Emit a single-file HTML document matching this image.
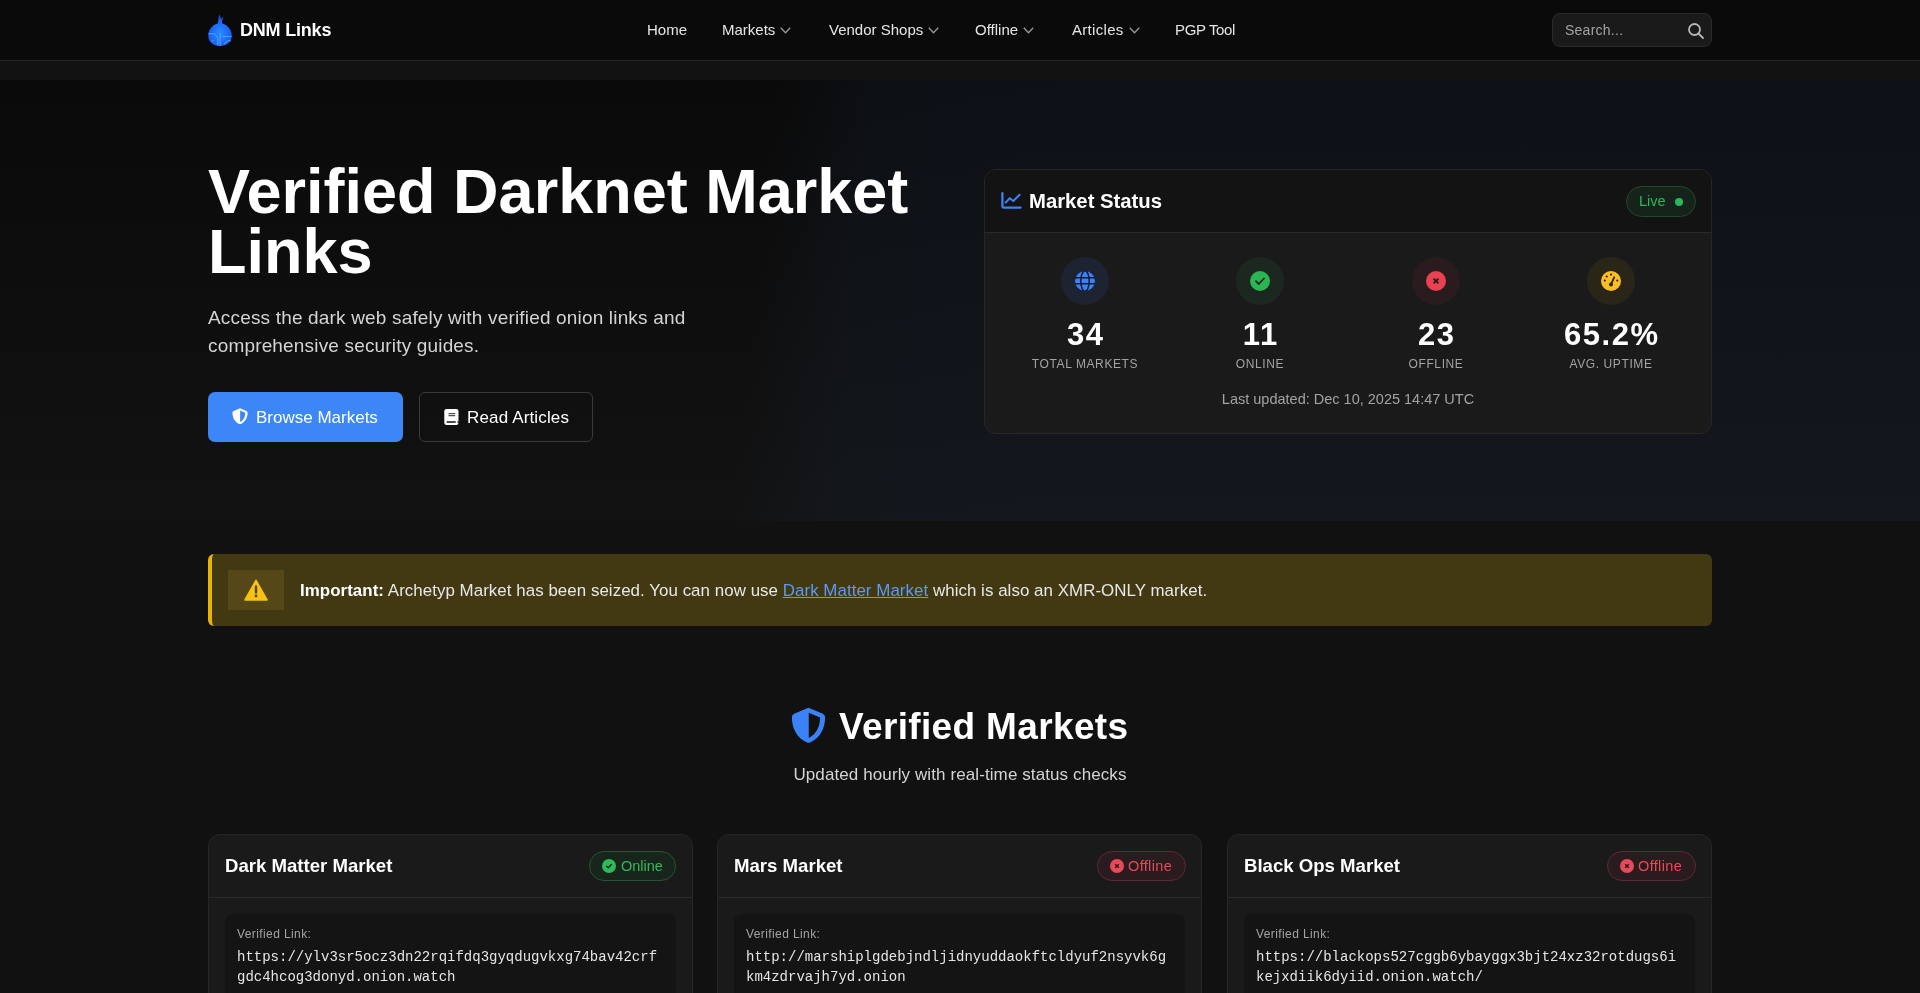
<!DOCTYPE html>
<html>
<head>
<meta charset="utf-8">
<style>
*{margin:0;padding:0;box-sizing:border-box}
html,body{width:1920px;height:993px;overflow:hidden}
body{background:#111111;font-family:"Liberation Sans",sans-serif;color:#fff;position:relative}
.abs{position:absolute}
nav{position:absolute;left:0;top:0;width:1920px;height:61px;background:#0a0a0a;border-bottom:1px solid #262626}
.band{position:absolute;left:0;top:61px;width:1920px;height:19px;background:#121212}
.hero{position:absolute;left:0;top:80px;width:1920px;height:441px;background:linear-gradient(96deg,rgba(40,78,138,0) 39.5%,rgba(40,78,138,0.08) 44.5%,rgba(40,78,138,0.1) 55%,rgba(40,78,138,0.1) 100%),linear-gradient(180deg,#0a0a0a 0%,#121212 100%)}
.logo-t{position:absolute;left:240px;top:20px;font-size:18px;font-weight:700;color:#fff;letter-spacing:-0.2px}
.nl{position:absolute;top:21px;font-size:15px;color:#e5e5e5;white-space:nowrap}
.chev{display:inline-block;vertical-align:middle;margin-left:5px;margin-top:-2px}
.search{position:absolute;left:1552px;top:13px;width:160px;height:34px;border-radius:8px;background:#1a1a1a;border:1px solid #2a2a2a}
.search span{position:absolute;left:12px;top:8px;font-size:14px;letter-spacing:0.25px;color:#a3a3a3}
h1{position:absolute;left:208px;top:161px;font-size:63px;line-height:60px;font-weight:700;color:#fff;letter-spacing:0px;white-space:nowrap}
.lead{position:absolute;left:208px;top:304px;font-size:19px;line-height:28px;color:#d4d4d4;letter-spacing:0.17px;white-space:nowrap}
.btn1{position:absolute;left:208px;top:392px;width:195px;height:50px;border-radius:7px;background:#3d86f7}
.btn2{position:absolute;left:419px;top:392px;width:174px;height:50px;border-radius:6px;border:1px solid #3a3a3a}
.btxt{position:absolute;top:16px;font-size:16px;color:#fff;white-space:nowrap}
.card{position:absolute;border-radius:12px;border:1px solid #262626;background:#1a1a1a;overflow:hidden}
.ms{left:984px;top:169px;width:728px;height:265px}
.ms .hd{position:absolute;left:0;top:0;width:100%;height:63px;background:#131313;border-bottom:1px solid #2a2a2a}
.stat{position:absolute;top:87px;width:170px;text-align:center}
.circ{width:48px;height:48px;border-radius:50%;margin:0 auto;position:relative}
.num{font-size:31px;font-weight:700;line-height:36px;margin-top:12px;color:#fff;letter-spacing:1.5px;text-indent:1.5px}
.lbl{font-size:12px;letter-spacing:0.6px;color:#a3a3a3;margin-top:4px}
.alert{position:absolute;left:208px;top:554px;width:1504px;height:72px;border-radius:6px;background:#423812;border-left:4px solid #eab308}
.mcard{top:834px;width:485px;height:200px}
.mcard .hd{position:absolute;left:0;top:0;width:100%;height:63px;border-bottom:1px solid #2a2a2a}
.mt{position:absolute;left:16px;top:20px;font-size:18.6px;font-weight:700;color:#fff;white-space:nowrap}
.badge{position:absolute;top:16px;height:30px;border-radius:15px;font-size:14.5px;white-space:nowrap}
.lbox{position:absolute;left:16px;top:79px;width:451px;height:120px;border-radius:8px;background:#141414}
.vl{position:absolute;left:12px;top:13px;font-size:12px;letter-spacing:0.4px;color:#a3a3a3}
.mono{position:absolute;left:12px;top:33px;font-family:"Liberation Mono",monospace;font-size:14px;line-height:20px;color:#e5e5e5;white-space:nowrap}
</style>
</head>
<body>
<div style="position:absolute;left:0;top:0;width:1920px;height:993px;will-change:transform">
<nav>
  <svg class="abs" style="left:206px;top:12px" width="28" height="36" viewBox="0 0 28 36">
    <defs><radialGradient id="og" cx="50%" cy="60%" r="60%"><stop offset="0" stop-color="#2a8cff"/><stop offset="1" stop-color="#1650f0"/></radialGradient></defs>
    <path d="M13.2 2.5 C14.5 4.5 14.6 6 14.8 7.5 C15.8 6.2 16.6 5.6 17.6 5.2 C16.6 7 16 9 16 11.2 C20.8 12.6 25.8 17 25.8 23.5 C25.8 30 20.5 34 14 34 C7.5 34 2.2 30 2.2 23.5 C2.2 17 7.2 12.6 12 11.2 C12.3 8 12.8 5 13.2 2.5 Z" fill="url(#og)"/>
    <path d="M2.6 21.8 H8.5 L11.8 25.5 V33.5 M14.2 21.5 V33.8 M16.5 24.6 H25.5 M18 32 L21.5 28.8 H25 M5.8 29 L7.8 28" stroke="#55b6ff" stroke-width="1" fill="none" opacity=".85"/>
  </svg>
  <div class="logo-t">DNM Links</div>
  <div class="nl" style="left:647px">Home</div>
  <div class="nl" style="left:722px">Markets<svg class="chev" width="11" height="7" viewBox="0 0 11 7"><path d="M0.8 0.8 L5.5 5.8 L10.2 0.8" stroke="#9a9a9a" stroke-width="1.3" fill="none"/></svg></div>
  <div class="nl" style="left:829px">Vendor Shops<svg class="chev" width="11" height="7" viewBox="0 0 11 7"><path d="M0.8 0.8 L5.5 5.8 L10.2 0.8" stroke="#9a9a9a" stroke-width="1.3" fill="none"/></svg></div>
  <div class="nl" style="left:975px">Offline<svg class="chev" width="11" height="7" viewBox="0 0 11 7"><path d="M0.8 0.8 L5.5 5.8 L10.2 0.8" stroke="#9a9a9a" stroke-width="1.3" fill="none"/></svg></div>
  <div class="nl" style="left:1072px;letter-spacing:0.3px">Articles<svg class="chev" width="11" height="7" viewBox="0 0 11 7"><path d="M0.8 0.8 L5.5 5.8 L10.2 0.8" stroke="#9a9a9a" stroke-width="1.3" fill="none"/></svg></div>
  <div class="nl" style="left:1175px;letter-spacing:-0.35px">PGP Tool</div>
  <div class="search"><span>Search...</span>
    <svg class="abs" style="left:134px;top:8px" width="18" height="18" viewBox="0 0 18 18"><circle cx="7.5" cy="7.5" r="5.5" stroke="#b5b5b5" stroke-width="1.8" fill="none"/><path d="M11.5 11.5 L16 16" stroke="#b5b5b5" stroke-width="1.8" stroke-linecap="round"/></svg>
  </div>
</nav>
<div class="band"></div>
<div class="hero"></div>

<h1>Verified Darknet Market<br>Links</h1>
<div class="lead">Access the dark web safely with verified onion links and<br>comprehensive security guides.</div>
<div class="btn1">
  <svg class="abs" style="left:24px;top:16px" width="16" height="17" viewBox="0 0 16 17"><path d="M8 0.3 L14.3 3 C15.1 3.3 15.6 4 15.6 4.8 C15.5 9.8 13.4 14 8.7 16.1 C8.25 16.3 7.75 16.3 7.3 16.1 C2.6 14 0.5 9.8 0.4 4.8 C0.4 4 0.9 3.3 1.7 3 Z" fill="#fff"/><path d="M8.1 2.6 L13.3 4.8 C13.2 9 11.6 12.3 8.1 14.1 Z" fill="#3d86f7"/></svg>
  <div class="btxt" style="left:48px;font-size:17px;top:16px">Browse Markets</div>
</div>
<div class="btn2">
  <svg class="abs" style="left:24px;top:16px" width="15" height="16" viewBox="0 0 15 16"><rect x="0.3" y="0" width="14.2" height="16" rx="2.3" fill="#fff"/><path d="M4.5 4.7 H11.2 M4.5 6.7 H11.2" stroke="#111" stroke-width="0.9"/><path d="M3.2 13.1 H11.2" stroke="#111" stroke-width="1.5" stroke-linecap="round"/><rect x="13.5" y="12.2" width="1.2" height="1.7" fill="#111"/></svg>
  <div class="btxt" style="left:47px;font-size:17px;top:15px;letter-spacing:0.15px">Read Articles</div>
</div>

<div class="card ms">
  <div class="hd"></div>
  <svg class="abs" style="left:16px;top:22px" width="21" height="18" viewBox="0 0 21 18"><path d="M1.4 1.2 V14 Q1.4 15.6 3 15.6 H19.6" stroke="#3b82f6" stroke-width="2.3" fill="none" stroke-linecap="round" stroke-linejoin="round"/><path d="M4.6 10.6 L8.8 6.2 L12.3 9 L18.6 2.8" stroke="#3b82f6" stroke-width="2.1" fill="none" stroke-linecap="round" stroke-linejoin="round"/></svg>
  <div class="abs" style="left:44px;top:20px;font-size:20.3px;font-weight:700;white-space:nowrap">Market Status</div>
  <div class="abs" style="left:641px;top:16px;width:70px;height:31px;border-radius:16px;background:#15231a;border:1px solid #1f4a2b">
    <span class="abs" style="left:12px;top:6px;font-size:14.5px;color:#2bb85a">Live</span>
    <span class="abs" style="left:48px;top:11px;width:8px;height:8px;border-radius:50%;background:#2bb85a"></span>
  </div>
  <div class="stat" style="left:15px">
    <div class="circ" style="background:#1d2330">
      <svg class="abs" style="left:14px;top:14px" width="20" height="20" viewBox="0 0 20 20"><circle cx="10" cy="10" r="10" fill="#3b82f6"/><ellipse cx="10" cy="10" rx="4.2" ry="10.2" stroke="#0d1a33" stroke-width="1.5" fill="none"/><path d="M0 6.8 H20 M0 12.7 H20" stroke="#0d1a33" stroke-width="1.5" fill="none"/></svg>
    </div>
    <div class="num">34</div><div class="lbl">TOTAL MARKETS</div>
  </div>
  <div class="stat" style="left:190px">
    <div class="circ" style="background:#1b271f">
      <svg class="abs" style="left:14px;top:14px" width="20" height="20" viewBox="0 0 20 20"><circle cx="10" cy="10" r="10" fill="#2bb553"/><path d="M6 10.2 L8.8 13 L14 7.5" stroke="#1b271f" stroke-width="1.8" fill="none" stroke-linecap="round" stroke-linejoin="round"/></svg>
    </div>
    <div class="num">11</div><div class="lbl">ONLINE</div>
  </div>
  <div class="stat" style="left:366px">
    <div class="circ" style="background:#2a1c1e">
      <svg class="abs" style="left:14px;top:14px" width="20" height="20" viewBox="0 0 20 20"><circle cx="10" cy="10" r="10" fill="#e8414f"/><path d="M7.6 7.6 L12.4 12.4 M12.4 7.6 L7.6 12.4" stroke="#2a1c1e" stroke-width="2" stroke-linecap="butt"/></svg>
    </div>
    <div class="num">23</div><div class="lbl">OFFLINE</div>
  </div>
  <div class="stat" style="left:541px">
    <div class="circ" style="background:#2a2617">
      <svg class="abs" style="left:14px;top:14px" width="20" height="20" viewBox="0 0 20 20"><circle cx="10" cy="10" r="10" fill="#fbbf24"/><path d="M10 13.3 L13.2 6.3" stroke="#2a2617" stroke-width="1.8" stroke-linecap="round"/><circle cx="10" cy="13.5" r="2" fill="#2a2617"/><circle cx="3.8" cy="9.6" r="1.1" fill="#2a2617"/><circle cx="5.7" cy="5.5" r="1.1" fill="#2a2617"/><circle cx="10" cy="3.6" r="1.1" fill="#2a2617"/><circle cx="16.3" cy="9.6" r="1.1" fill="#2a2617"/></svg>
    </div>
    <div class="num">65.2%</div><div class="lbl">AVG. UPTIME</div>
  </div>
  <div class="abs" style="left:0;top:221px;width:726px;text-align:center;font-size:14.5px;color:#a3a3a3">Last updated: Dec 10, 2025 14:47 UTC</div>
</div>

<div class="alert">
  <div class="abs" style="left:16px;top:16px;width:56px;height:40px;background:#564719">
    <svg class="abs" style="left:16px;top:9px" width="24" height="23" viewBox="0 0 24 23"><path d="M12 1.3 L23 20.9 H1 Z" fill="#f7c312" stroke="#f7c312" stroke-width="1.6" stroke-linejoin="round"/><path d="M12 7.5 V13.5" stroke="#564719" stroke-width="2.4" stroke-linecap="round"/><circle cx="12" cy="17" r="1.4" fill="#564719"/></svg>
  </div>
  <div class="abs" style="left:88px;top:27px;font-size:16.9px;letter-spacing:0.05px;color:#e8e8e8;white-space:nowrap"><b style="color:#fff">Important:</b> Archetyp Market has been seized. You can now use <span style="color:#5b9bf0;text-decoration:underline">Dark Matter Market</span> which is also an XMR-ONLY market.</div>
</div>

<svg class="abs" style="left:791px;top:707px" width="35" height="37.5" viewBox="0 0 16 17" preserveAspectRatio="none"><path d="M8 0.3 L14.3 3 C15.1 3.3 15.6 4 15.6 4.8 C15.5 9.8 13.4 14 8.7 16.1 C8.25 16.3 7.75 16.3 7.3 16.1 C2.6 14 0.5 9.8 0.4 4.8 C0.4 4 0.9 3.3 1.7 3 Z" fill="#3b82f6"/><path d="M8.1 2.6 L13.3 4.8 C13.2 9 11.6 12.3 8.1 14.1 Z" fill="#111111"/></svg>
<div class="abs" style="left:839px;top:706px;font-size:37px;font-weight:700;letter-spacing:0.35px;white-space:nowrap">Verified Markets</div>
<div class="abs" style="left:0;top:765px;width:1920px;text-align:center;font-size:17px;letter-spacing:0.1px;color:#d4d4d4">Updated hourly with real-time status checks</div>

<div class="card mcard" style="left:208px">
  <div class="hd"></div>
  <div class="mt">Dark Matter Market</div>
  <div class="badge" style="left:380px;width:87px;background:#17251b;border:1px solid #275535;color:#30b95a">
    <svg class="abs" style="left:12px;top:7px" width="14" height="14" viewBox="0 0 14 14"><circle cx="7" cy="7" r="7" fill="#30b95a"/><path d="M4.6 7.2 L6.3 8.8 L9.4 5.6" stroke="#17251b" stroke-width="1.4" fill="none" stroke-linecap="round"/></svg>
    <span class="abs" style="left:31px;top:6px">Online</span>
  </div>
  <div class="lbox"><div class="vl">Verified Link:</div><div class="mono">https://ylv3sr5ocz3dn22rqifdq3gyqdugvkxg74bav42crf<br>gdc4hcog3donyd.onion.watch</div></div>
</div>
<div class="card mcard" style="left:717px">
  <div class="hd"></div>
  <div class="mt">Mars Market</div>
  <div class="badge" style="left:379px;width:89px;background:#2a1b1e;border:1px solid #5e2a35;color:#e84a5a">
    <svg class="abs" style="left:12px;top:7px" width="14" height="14" viewBox="0 0 14 14"><circle cx="7" cy="7" r="7" fill="#e84a5a"/><path d="M5.2 5.2 L8.8 8.8 M8.8 5.2 L5.2 8.8" stroke="#2a1b1e" stroke-width="1.5"/></svg>
    <span class="abs" style="left:30px;top:6px;letter-spacing:0.35px">Offline</span>
  </div>
  <div class="lbox"><div class="vl">Verified Link:</div><div class="mono">http://marshiplgdebjndljidnyuddaokftcldyuf2nsyvk6g<br>km4zdrvajh7yd.onion</div></div>
</div>
<div class="card mcard" style="left:1227px">
  <div class="hd"></div>
  <div class="mt">Black Ops Market</div>
  <div class="badge" style="left:379px;width:89px;background:#2a1b1e;border:1px solid #5e2a35;color:#e84a5a">
    <svg class="abs" style="left:12px;top:7px" width="14" height="14" viewBox="0 0 14 14"><circle cx="7" cy="7" r="7" fill="#e84a5a"/><path d="M5.2 5.2 L8.8 8.8 M8.8 5.2 L5.2 8.8" stroke="#2a1b1e" stroke-width="1.5"/></svg>
    <span class="abs" style="left:30px;top:6px;letter-spacing:0.35px">Offline</span>
  </div>
  <div class="lbox"><div class="vl">Verified Link:</div><div class="mono">https://blackops527cggb6ybayggx3bjt24xz32rotdugs6i<br>kejxdiik6dyiid.onion.watch/</div></div>
</div>
</div>
</body>
</html>
